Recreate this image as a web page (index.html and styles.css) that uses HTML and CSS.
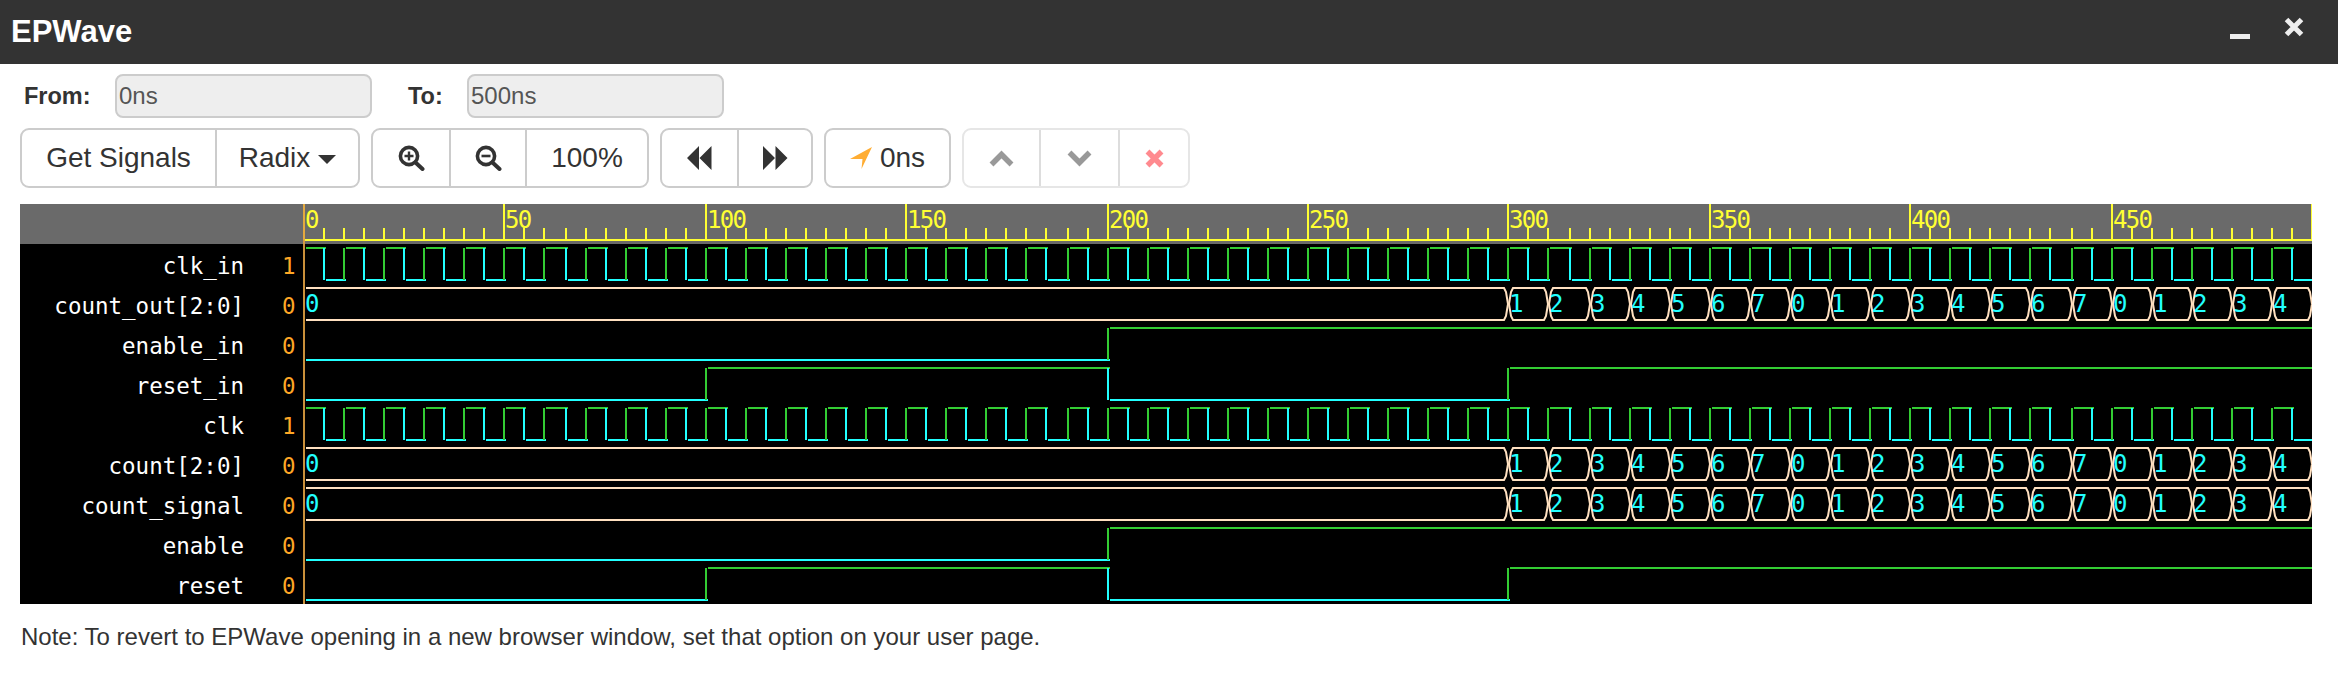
FILE: index.html

```html
<!DOCTYPE html>
<html lang="en">
<head>
  <meta charset="UTF-8">
  <title>EPWave</title>
  <link rel="stylesheet" href="styles.css">
</head>
<body>
  <header class="titlebar">
    <h1>EPWave</h1>
    <div class="window-btns">
      <svg class="win-icon" width="20" height="5" viewBox="0 0 20 5"><rect width="20" height="5" fill="#eee"/></svg>
      <svg class="win-icon" width="20" height="20" viewBox="0 0 20 20"><path d="M2.5 2.5 L17.5 17.5 M17.5 2.5 L2.5 17.5" stroke="#eee" stroke-width="5"/></svg>
    </div>
  </header>

  <main class="content">
    <div class="range">
      <label class="from-label">From:</label>
      <input class="range-input" type="text" value="0ns" disabled>
      <label class="to-label">To:</label>
      <input class="range-input" type="text" value="500ns" disabled>
    </div>

    <div class="toolbar">
      <div class="btn-group">
        <button class="btn w-signals">Get Signals</button>
        <button class="btn w-radix">Radix <span class="caret"></span></button>
      </div>
      <div class="btn-group">
        <button class="btn w-zoom">
          <svg width="27" height="26" viewBox="0 0 27 26"><circle cx="11" cy="11" r="8.6" fill="none" stroke="#333" stroke-width="3.6"/><path d="M17.5 17.5 L24.5 24" stroke="#333" stroke-width="4" stroke-linecap="round"/><path d="M6.5 11 H15.5 M11 6.5 V15.5" stroke="#333" stroke-width="2.4"/></svg>
        </button>
        <button class="btn w-zoom2">
          <svg width="27" height="26" viewBox="0 0 27 26"><circle cx="11" cy="11" r="8.6" fill="none" stroke="#333" stroke-width="3.6"/><path d="M17.5 17.5 L24.5 24" stroke="#333" stroke-width="4" stroke-linecap="round"/><path d="M6.5 11 H15.5" stroke="#333" stroke-width="2.6"/></svg>
        </button>
        <button class="btn w-pct">100%</button>
      </div>
      <div class="btn-group">
        <button class="btn w-back">
          <svg width="25" height="24" viewBox="0 0 25 24"><path d="M0 12 L12 0 V24 Z M12.5 12 L24.5 0 V24 Z" fill="#333"/></svg>
        </button>
        <button class="btn w-fwd">
          <svg width="25" height="24" viewBox="0 0 25 24"><path d="M0 0 L12 12 L0 24 Z M12.5 0 L24.5 12 L12.5 24 Z" fill="#333"/></svg>
        </button>
      </div>
      <div class="btn-group">
        <button class="btn w-cursor">
          <svg width="22" height="22" viewBox="0 0 22 22"><path d="M22 0 L0 12 L12.5 12 L11.5 22 Z" fill="#ffad33"/></svg>
          0ns
        </button>
      </div>
      <div class="btn-group is-disabled">
        <button class="btn w-up">
          <svg width="25" height="17" viewBox="0 0 25 17"><path d="M2.5 14.5 L12.5 4.5 L22.5 14.5" fill="none" stroke="#999" stroke-width="5.5"/></svg>
        </button>
        <button class="btn w-down">
          <svg width="25" height="17" viewBox="0 0 25 17"><path d="M2.5 2.5 L12.5 12.5 L22.5 2.5" fill="none" stroke="#999" stroke-width="5.5"/></svg>
        </button>
        <button class="btn w-remove">
          <svg width="19" height="19" viewBox="0 0 19 19"><path d="M2.5 2.5 L16.5 16.5 M16.5 2.5 L2.5 16.5" stroke="#ff8a8f" stroke-width="5.5"/></svg>
        </button>
      </div>
    </div>

    <div class="wave-view">
      <div class="signals">
        <div class="signals-head"></div>
        <div class="signal"><span class="name">clk_in</span><span class="val">1</span></div>
        <div class="signal"><span class="name">count_out[2:0]</span><span class="val">0</span></div>
        <div class="signal"><span class="name">enable_in</span><span class="val">0</span></div>
        <div class="signal"><span class="name">reset_in</span><span class="val">0</span></div>
        <div class="signal"><span class="name">clk</span><span class="val">1</span></div>
        <div class="signal"><span class="name">count[2:0]</span><span class="val">0</span></div>
        <div class="signal"><span class="name">count_signal</span><span class="val">0</span></div>
        <div class="signal"><span class="name">enable</span><span class="val">0</span></div>
        <div class="signal"><span class="name">reset</span><span class="val">0</span></div>
      </div>
      <svg id="plot" class="plot" width="2009" height="400" viewBox="303 204 2009 400"></svg>
    </div>

    <p class="note">Note: To revert to EPWave opening in a new browser window, set that option on your user page.</p>
  </main>

  <script src="wave.js"></script>
</body>
</html>
```

FILE: styles.css

```css
body {
  margin: 0;
  background: #fff;
  color: #333;
  font-family: "Liberation Sans", Arial, sans-serif;
}
.titlebar {
  display: flex;
  justify-content: space-between;
  align-items: center;
  height: 64px;
  padding: 0 34px 0 11px;
  background: #333;
  box-sizing: border-box;
}
.titlebar h1 {
  margin: 0;
  color: #fff;
  font-size: 31px;
  font-weight: 700;
}
.window-btns {
  display: flex;
  align-items: flex-start;
  gap: 34px;
  height: 22px;
  margin-top: -9px;
}
.win-icon:first-child {
  margin-top: 17px;
}
.content {
  padding: 10px 26px 0 20px;
}
.range {
  display: flex;
  align-items: center;
  height: 44px;
}
.range label {
  font-size: 23.5px;
  font-weight: 700;
}
.from-label {
  width: 91px;
  padding-left: 4px;
}
.to-label {
  width: 59px;
  margin-left: 36px;
}
.range-input {
  width: 257px;
  height: 44px;
  padding: 0 2px;
  border: 2px solid #ccc;
  border-radius: 8px;
  background: #eee;
  color: #555;
  font-family: inherit;
  font-size: 24px;
  box-sizing: border-box;
}
.toolbar {
  display: flex;
  gap: 11px;
  margin-top: 10px;
}
.btn-group {
  display: flex;
  height: 60px;
  border: 2px solid #ccc;
  border-radius: 9px;
  background: #fff;
  box-sizing: border-box;
}
.btn-group.is-disabled {
  border-color: #e6e6e6;
}
.btn {
  display: flex;
  align-items: center;
  justify-content: center;
  gap: 8px;
  padding: 0;
  border: 0;
  border-right: 2px solid #ccc;
  background: none;
  color: #333;
  font-family: inherit;
  font-size: 28px;
  box-sizing: border-box;
}
.btn:last-child {
  border-right: 0;
}
.is-disabled .btn {
  border-right-color: #ddd;
}
.w-signals { width: 195px; }
.w-radix { width: 141px; }
.w-zoom { width: 78px; }
.w-zoom2 { width: 76px; }
.w-pct { width: 120px; }
.w-back { width: 77px; }
.w-fwd { width: 72px; }
.w-cursor { width: 123px; }
.w-up { width: 77px; }
.w-down { width: 79px; }
.w-remove { width: 68px; }
.caret {
  width: 0;
  height: 0;
  margin-top: 2px;
  border-top: 9px solid #333;
  border-left: 9px solid transparent;
  border-right: 9px solid transparent;
}
.wave-view {
  display: flex;
  width: 2292px;
  height: 400px;
  margin-top: 16px;
  background: #000;
}
.signals {
  width: 283px;
  flex: none;
}
.signals-head {
  height: 40px;
  background: #6a6a6a;
}
.signal {
  display: flex;
  height: 40px;
  padding-top: 9px;
  box-sizing: border-box;
  font-family: "DejaVu Sans Mono", monospace;
  font-size: 22.5px;
  line-height: 26px;
}
.name {
  width: 224px;
  color: #fff;
  text-align: right;
}
.val {
  margin-left: 38px;
  color: #ffa726;
}
.plot {
  display: block;
  flex: none;
}
.ruler-num {
  font-family: "DejaVu Sans Mono", monospace;
  font-size: 24px;
  letter-spacing: -1.7px;
}
.bus-num {
  font-family: "DejaVu Sans Mono", monospace;
  font-size: 24px;
}
.note {
  margin: 19px 0 0 1px;
  font-size: 24px;
  line-height: 28px;
}
```

FILE: wave.js

```js
const SVG_NS = 'http://www.w3.org/2000/svg';
const plot = document.getElementById('plot');

const YELLOW = '#ffff33';
const GREEN = '#33cc33';
const CYAN = '#22ffff';
const PEACH = '#ffe0c0';

// time (ns) to page x, the trace sits on a 2px grid
function tx(t) {
  return 304 + 2 * Math.round(t * 2.008);
}

function add(tag, attrs, text) {
  const el = document.createElementNS(SVG_NS, tag);
  for (const k in attrs) el.setAttribute(k, attrs[k]);
  if (text !== undefined) el.textContent = text;
  plot.appendChild(el);
  return el;
}

function line(x1, y1, x2, y2, color) {
  add('line', { x1, y1, x2, y2, stroke: color, 'stroke-width': 2, 'shape-rendering': 'crispEdges' });
}

function drawRuler() {
  add('rect', { x: 303, y: 204, width: 2009, height: 40, fill: '#6a6a6a' });
  for (let t = 0; t <= 500; t += 5) {
    const top = t % 50 === 0 ? 204 : 228;
    line(tx(t), top, tx(t), 240, YELLOW);
  }
  line(304, 240, 2312, 240, YELLOW);
  for (let t = 0; t < 500; t += 50) {
    add('text', { x: tx(t) + 1, y: 228, class: 'ruler-num', fill: YELLOW }, t);
  }
}

// edges: list of [time, value], the first one being the value at 0
function drawBit(row, edges) {
  const hi = row + 4;
  const lo = row + 36;
  edges.forEach(function(edge, i) {
    const x = tx(edge[0]);
    const next = i + 1 < edges.length ? tx(edges[i + 1][0]) + 2 : 2312;
    const color = edge[1] ? GREEN : CYAN;
    const y = edge[1] ? hi : lo;
    if (i > 0) line(x, hi, x, lo, color);
    line(x + 2, y, next, y, color);
  });
}

function drawClock(row) {
  const edges = [];
  for (let t = 0; t < 500; t += 5) edges.push([t, (t / 5 + 1) % 2]);
  drawBit(row, edges);
}

function drawBus(row) {
  const top = row + 4;
  const mid = row + 20;
  const bot = row + 36;
  const segs = [[0, 300, 0]];
  for (let t = 300, v = 1; t < 500; t += 10, v++) segs.push([t, t + 10, v % 8]);
  segs.forEach(function(s, i) {
    const a = tx(s[0]);
    const b = tx(s[1]);
    const right = `L${b - 4} ${top} L${b - 2} ${top + 4} L${b} ${mid} L${b - 2} ${bot - 4} L${b - 4} ${bot}`;
    const d = i === 0
      ? `M${a + 2} ${top} ${right} L${a + 2} ${bot}`
      : `M${a + 1} ${mid} L${a + 3} ${top + 4} L${a + 5} ${top} ${right} L${a + 5} ${bot} L${a + 3} ${bot - 4} Z`;
    add('path', { d, fill: 'none', stroke: PEACH, 'stroke-width': 2 });
    add('text', { x: a + 1, y: row + 28, class: 'bus-num', fill: CYAN }, s[2]);
  });
}

drawRuler();
drawClock(244);
drawBus(284);
drawBit(324, [[0, 0], [200, 1]]);
drawBit(364, [[0, 0], [100, 1], [200, 0], [300, 1]]);
drawClock(404);
drawBus(444);
drawBus(484);
drawBit(524, [[0, 0], [200, 1]]);
drawBit(564, [[0, 0], [100, 1], [200, 0], [300, 1]]);

// cursor on top of everything
add('rect', { x: 303, y: 204, width: 2, height: 400, fill: '#e0a040', opacity: 0.9 });
```
